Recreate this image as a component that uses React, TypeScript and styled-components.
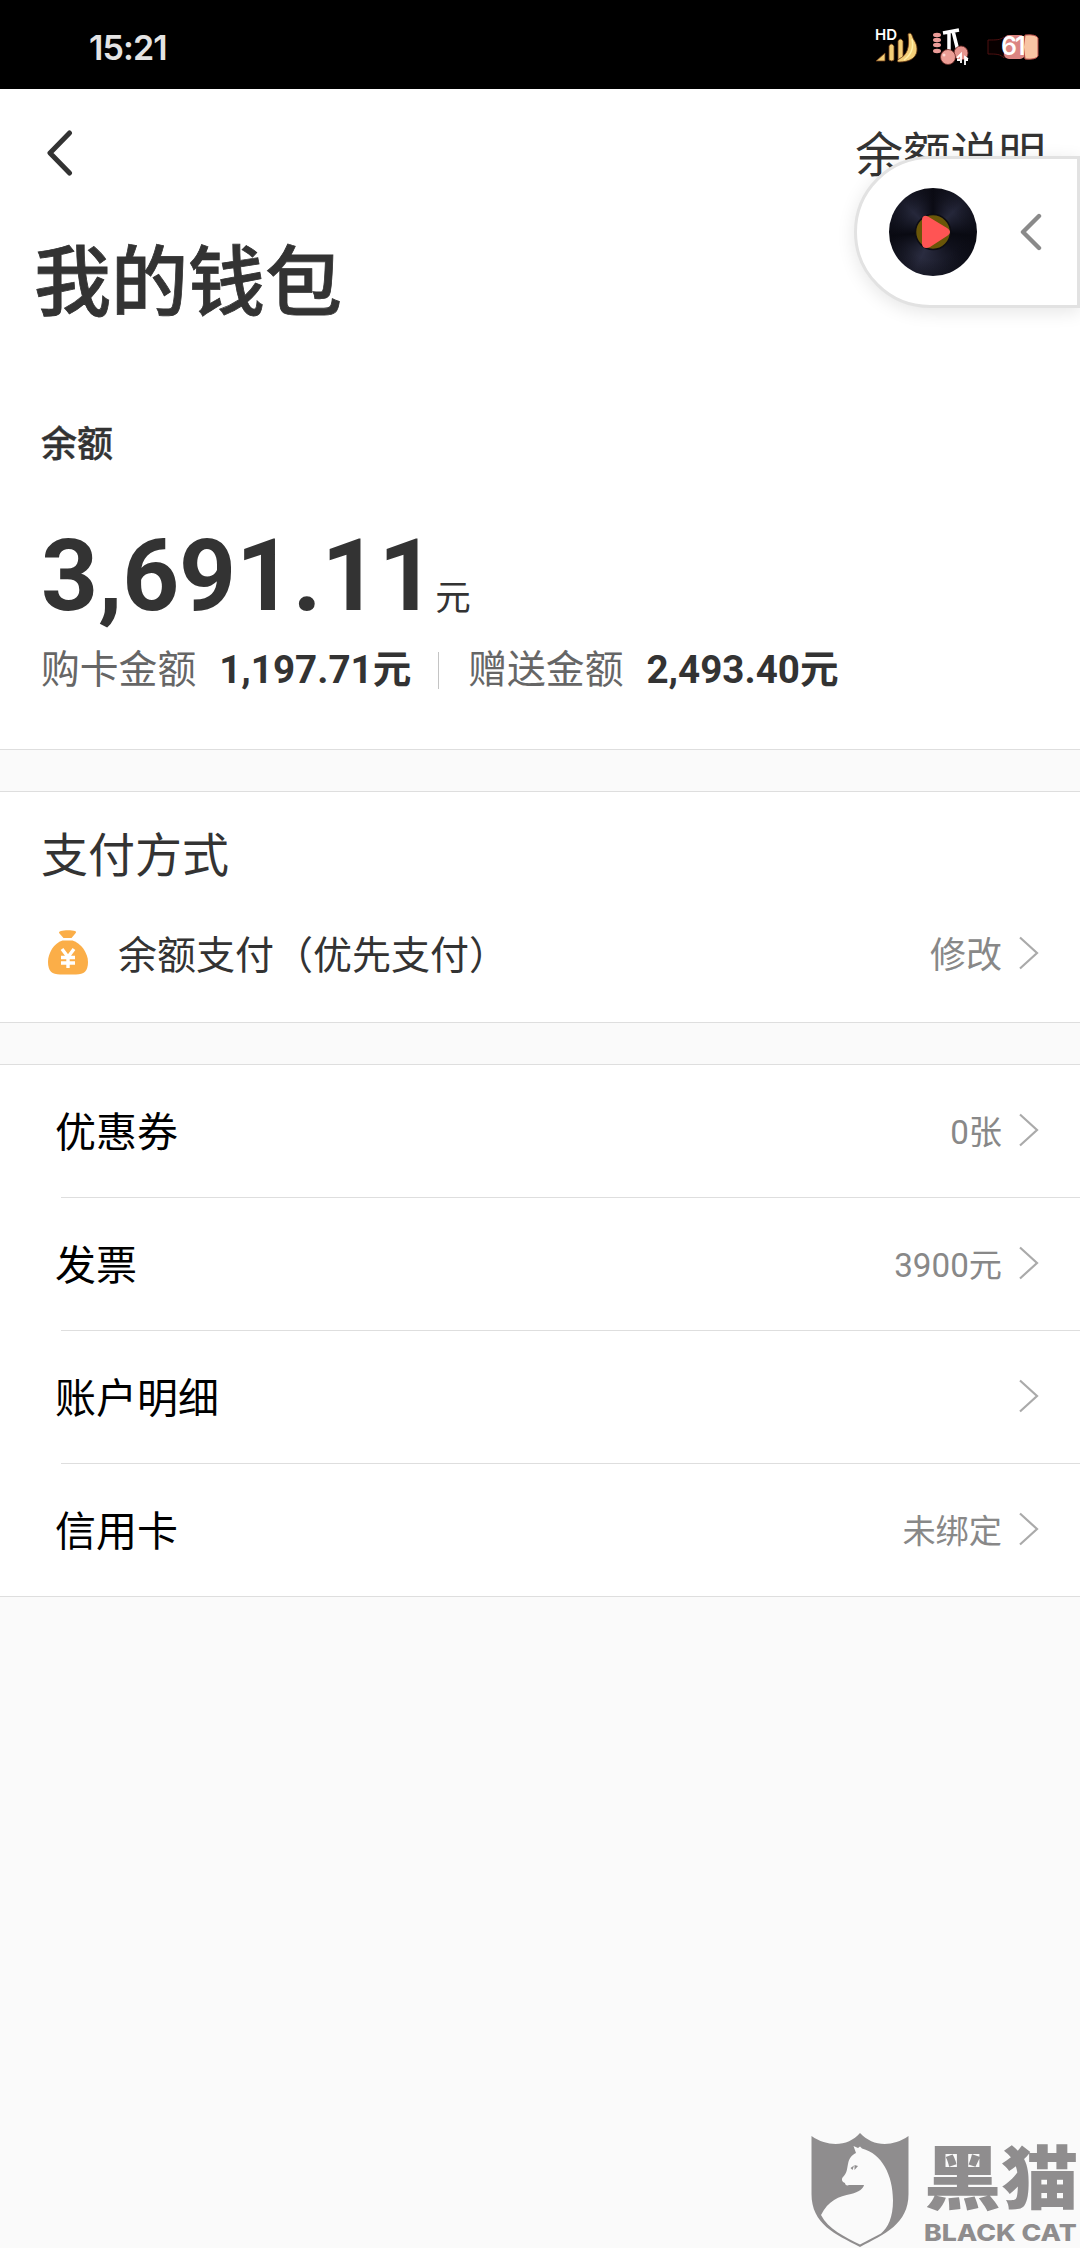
import React from 'react';
import styled, { createGlobalStyle } from 'styled-components';

const GlobalStyle = createGlobalStyle`
  * { box-sizing: border-box; }
  body { margin: 0; background: #fafafa; }
`;

const Screen = styled.div`
  position: relative;
  display: flex;
  flex-direction: column;
  width: 1080px;
  height: 2248px;
  overflow: hidden;
  background: #fafafa;
  color: #333;
  font-family: Roboto, 'Noto Sans CJK SC', sans-serif;
`;

const StatusBar = styled.header`
  display: flex;
  justify-content: space-between;
  align-items: center;
  height: 89px;
  padding: 6px 35px 0 89px;
  background: #000;
`;

const Clock = styled.span`
  color: #e4e4e4;
  font: 600 34px/40px Inter, sans-serif;
  letter-spacing: -0.9px;
`;

const StatusIcons = styled.svg`
  display: block;
  width: 175px;
  height: 45px;
`;

const Summary = styled.section`
  height: 661px;
  background: #fff;
  border-bottom: 1px solid #dedede;
`;

const NavBar = styled.nav`
  display: flex;
  justify-content: space-between;
  align-items: center;
  height: 128px;
  padding: 0 34px 0 43px;
`;

const NavLink = styled.span`
  padding-top: 5px;
  font-size: 47.7px;
  line-height: 60px;
`;

const Title = styled.h1`
  margin: 17px 0 0 34px;
  font-size: 77px;
  font-weight: 500;
  line-height: 100px;
  -webkit-text-stroke: 0.8px #333;
`;

const Balance = styled.div`
  display: flex;
  flex-direction: column;
  padding: 87px 0 0 41px;
`;

const BalanceLabel = styled.span`
  font-size: 36px;
  font-weight: 500;
  line-height: 48px;
  -webkit-text-stroke: 0.4px #333;
`;

const Amount = styled.div`
  display: flex;
  align-items: baseline;
  height: 120px;
  margin-top: 47px;
  line-height: 120px;
`;

const AmountValue = styled.span`
  font-size: 99.5px;
  font-weight: 700;
  letter-spacing: -0.2px;
`;

const AmountUnit = styled.span`
  font-size: 35.5px;
`;

const Breakdown = styled.div`
  display: flex;
  align-items: center;
  height: 48px;
  margin-top: 10px;
  font-size: 38.8px;
  line-height: 48px;
`;

const BreakdownLabel = styled.span`
  color: #666;
`;

const BreakdownValue = styled.span`
  margin-left: 23px;
  font-size: 38.6px;
  font-weight: 700;
`;

const Separator = styled.i`
  width: 1px;
  height: 37px;
  margin: 0 29px 0 27px;
  background: #c4c4c4;
`;

const Panel = styled.section`
  display: flex;
  flex-direction: column;
  margin-top: 41px;
  background: #fff;
  border-top: 1px solid #dedede;
  border-bottom: 1px solid #dedede;
`;

const PanelTitle = styled.h2`
  margin: 32px 0 0 41px;
  font-size: 47px;
  font-weight: 400;
  line-height: 64px;
`;

const PayRow = styled.div`
  display: flex;
  align-items: center;
  height: 134px;
  padding: 0 41px 5px 47px;
`;

const PayName = styled.span`
  flex: 1;
  margin-left: 29px;
  padding-top: 6px;
  font-size: 39px;
  line-height: 60px;
`;

const Row = styled.div`
  display: flex;
  align-items: center;
  height: 132px;
  padding: 0 41px 2px 55px;
`;

const RowLabel = styled.span`
  flex: 1;
  padding-top: 6px;
  color: #000;
  font-size: 41px;
  line-height: 60px;
`;

const RowValue = styled.span<{ $size?: number }>`
  margin-right: 17px;
  padding-top: 6px;
  color: #888;
  font-size: ${({ $size }) => $size ?? 33.2}px;
  line-height: 60px;
`;

const RowLine = styled.hr`
  width: 1019px;
  height: 1px;
  margin: 0 0 0 61px;
  border: 0;
  background: #dedede;
`;

const FloatPlayer = styled.aside`
  position: absolute;
  top: 156px;
  right: 0;
  display: flex;
  align-items: center;
  justify-content: space-between;
  width: 226px;
  height: 152px;
  padding: 0 35px 0 32px;
  border: 3px solid #e2e2e2;
  border-radius: 76px 0 0 76px;
  background: #fff;
  box-shadow: 0 4px 18px rgba(0, 0, 0, 0.1);
`;

const Disc = styled.div`
  display: flex;
  align-items: center;
  justify-content: center;
  width: 88px;
  height: 88px;
  border-radius: 50%;
  background:
    radial-gradient(circle, transparent 0 45%, rgba(10, 10, 18, 0.45) 70%),
    conic-gradient(from 0deg, #0b0b14, #25273a 45deg, #090a12 95deg, #10111c 130deg, #2a2c40 205deg, #090a12 265deg, #25273a 315deg, #0b0b14);
`;

const Watermark = styled.footer`
  position: absolute;
  right: 4px;
  bottom: 0;
  display: flex;
  gap: 15px;
  color: #8f8d8e;
`;

const WatermarkText = styled.div`
  display: flex;
  flex-direction: column;
  align-items: flex-start;
  justify-content: space-between;
  width: 152px;
  height: 116px;
  padding-bottom: 3px;
`;

const WatermarkName = styled.span`
  font: 900 69px/84px 'Noto Sans CJK SC', sans-serif;
  white-space: nowrap;
  transform: scaleX(1.12);
  transform-origin: left;
`;

const WatermarkLatin = styled.span`
  font: 800 23px/23px Inter, sans-serif;
  white-space: nowrap;
  transform: scaleX(1.16);
  transform-origin: left;
`;

const BackIcon = () => (
  <svg width="30" height="46" viewBox="0 0 30 46" fill="none">
    <path d="M26.500 3 7 23l19.500 20" stroke="#333" strokeWidth="5" strokeLinecap="round" strokeLinejoin="round" />
  </svg>
);

const Chevron = () => (
  <svg width="20" height="34" viewBox="0 0 20 34" fill="none">
    <path d="M1 1.500 18 17 1 32.500" stroke="#aaa" strokeWidth="2.200" />
  </svg>
);

const PlayerChevron = () => (
  <svg width="22" height="38" viewBox="0 0 22 38" fill="none">
    <path d="M19 3 3 19l16 16" stroke="#8a8a8a" strokeWidth="4.400" strokeLinecap="round" strokeLinejoin="round" />
  </svg>
);

const PlayMark = () => (
  <svg width="40" height="40" viewBox="0 0 40 40">
    <circle cx="20" cy="20" r="17.500" fill="#6a5608" stroke="#0d0d14" strokeWidth="1.500" />
    <path d="M9 8c0-4 3-5 6-3.500l19 11.500c4 2.500 4 5.500 0 8L17 35c-4 2-8 1-8-3.500z" fill="#ff5454" />
  </svg>
);

const MoneyBag = () => (
  <svg width="42" height="46" viewBox="0 0 42 46">
    <path d="M14 1c3-1 11-1 14 0 1.500.7 1.200 1.700.3 2.500L24.500 8h-8L12.500 3.500C11.500 2.500 12 1.500 14 1z" fill="#fbae48" />
    <path d="M15.500 10.500h10C34 13 41 23 41 32c0 9-4 12.500-12 12.500H13C5 44.500 1 41 1 32c0-9 6-19 14.500-21.500z" fill="#fbae48" />
    <path d="m15 19 6 8 6-8M21 26v12M14 27.500h14M14 33h14" fill="none" stroke="#fff" strokeWidth="3.400" />
  </svg>
);

const CatShield = () => (
  <svg width="98" height="116" viewBox="0 0 98 116">
    <path d="M.5 4C18 16 38 14 49 1c12 13 31 15 48.500 3v58c0 30-24 40-48.500 53C24 102 .5 92 .5 62z" fill="#8f8d8e" />
    <path d="M42.500 14 47 16l2-1.500 2 2c20 5 31 27 31 52 0 17-5 27-12 33l-21 11C34 105 17 97 10 83c7-14 18-19 30-21 8-2 12-5 13-9H38c-2 1-4 0-4-2-3-1-4-4-2-6 4-4 4-8 5-13 1-6 4-9 8-11z" fill="#fafafa" />
    <path d="m39.500 36 3.500-2.500-1.500 4.500zM43.500 33l3.500 1-3.500 4z" fill="#8f8d8e" />
  </svg>
);

const StatusArt = () => (
  <StatusIcons viewBox="870 25 175 45">
    <g fill="#f3cf78" stroke="#6e3c17" strokeWidth=".8">
      <path d="m876 61 9-8v8zM889 46q2-4 5 0v14q-2 2-5 0zM898 41q2-4 5 0v18q-2 3-5 1z" />
      <path d="M908 34c4-3 4 3 6 6 5 7 6 22-15 22-2 0-2-2 0-3 8-4 11-11 9-25z" />
    </g>
    <path d="M912 39q3 13-8 21" fill="none" stroke="#fff0a6" strokeWidth="1.500" />
    <text x="875" y="40" fill="#fff" fontFamily="Inter" fontSize="15" fontWeight="600">HD</text>
    <g fill="#eb9c98">
      <ellipse cx="937" cy="35" rx="4" ry="2.200" />
      <ellipse cx="937" cy="40" rx="4" ry="2.200" />
      <ellipse cx="937" cy="45" rx="4" ry="2.200" />
      <ellipse cx="937" cy="51" rx="4" ry="2.200" />
    </g>
    <path d="m943 33 16-3M949 32v20M953 31l5 20" fill="none" stroke="#fff" strokeWidth="3.500" />
    <circle cx="961" cy="53" r="7" fill="#e6958e" stroke="#6b2824" strokeWidth=".8" />
    <circle cx="948" cy="57" r="7.500" fill="#ec9e96" stroke="#6b2824" strokeWidth=".8" />
    <circle cx="944" cy="55" r="1.500" fill="#ffd7d0" />
    <path d="m957 58 4-4v9M965 65v-8l3 2M957 60h3M965 60h3" fill="none" stroke="#fff" strokeWidth="1.800" />
    <path d="M1004 37c-4 3-7 3-16 3v14c9 0 12 0 16 4z" fill="#080000" stroke="#4e1010" />
    <rect x="1004" y="35" width="21" height="24" rx="5" fill="#db8582" />
    <path d="M1025 35q11-1 13 3v18q-2 4-13 3-3-12 0-24z" fill="#f8c4a3" stroke="#b64a45" />
    <text x="1001" y="55" fill="#fff" fontFamily="Inter" fontSize="25" fontWeight="600" letterSpacing="-2">61</text>
  </StatusIcons>
);

const rows = [
  { label: '优惠券', value: '0张' },
  { label: '发票', value: '3900元' },
  { label: '账户明细', value: '' },
  { label: '信用卡', value: '未绑定' },
];

export default function App() {
  return (
    <Screen lang="zh-CN">
      <GlobalStyle />
      <StatusBar>
        <Clock>15:21</Clock>
        <StatusArt />
      </StatusBar>
      <Summary>
        <NavBar>
          <BackIcon />
          <NavLink>余额说明</NavLink>
        </NavBar>
        <Title>我的钱包</Title>
        <Balance>
          <BalanceLabel>余额</BalanceLabel>
          <Amount>
            <AmountValue>3,691.11</AmountValue>
            <AmountUnit>元</AmountUnit>
          </Amount>
          <Breakdown>
            <BreakdownLabel>购卡金额</BreakdownLabel>
            <BreakdownValue>1,197.71元</BreakdownValue>
            <Separator />
            <BreakdownLabel>赠送金额</BreakdownLabel>
            <BreakdownValue>2,493.40元</BreakdownValue>
          </Breakdown>
        </Balance>
      </Summary>
      <Panel>
        <PanelTitle>支付方式</PanelTitle>
        <PayRow>
          <MoneyBag />
          <PayName>余额支付（优先支付）</PayName>
          <RowValue $size={36}>修改</RowValue>
          <Chevron />
        </PayRow>
      </Panel>
      <Panel>
        {rows.map((row, i) => (
          <React.Fragment key={row.label}>
            {i > 0 && <RowLine />}
            <Row>
              <RowLabel>{row.label}</RowLabel>
              <RowValue>{row.value}</RowValue>
              <Chevron />
            </Row>
          </React.Fragment>
        ))}
      </Panel>
      <FloatPlayer>
        <Disc>
          <PlayMark />
        </Disc>
        <PlayerChevron />
      </FloatPlayer>
      <Watermark>
        <CatShield />
        <WatermarkText>
          <WatermarkName>黑猫</WatermarkName>
          <WatermarkLatin>BLACK CAT</WatermarkLatin>
        </WatermarkText>
      </Watermark>
    </Screen>
  );
}
